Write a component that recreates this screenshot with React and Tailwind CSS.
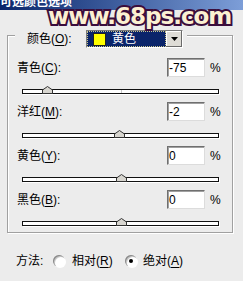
import React from "react";

const font = { fontFamily: '"Liberation Sans", "Noto Sans CJK SC", sans-serif' };

function Mn({ ch }) {
  return (
    <span>
      (<span className="underline underline-offset-2">{ch}</span>)
    </span>
  );
}

function Slider({ value }) {
  const pct = (value + 100) / 200;
  return (
    <div className="relative ml-[14px] mt-[12px] h-[5px] w-[197px] border border-[#111] bg-white shadow-[1px_1px_0_#fff]">
      <div className="absolute left-[98px] top-0 h-[3px] w-px bg-[#c8c8c8]" />
      <svg
        className="absolute top-[-4px]"
        style={{ left: `${pct * 195 - 5}px` }}
        width="11"
        height="8"
        viewBox="0 0 11 8"
      >
        <polygon points="0.5,7.5 0.5,4 5.5,0.5 10.5,4 10.5,7.5" fill="#d8d6d0" stroke="#333" strokeWidth="1" />
      </svg>
    </div>
  );
}

function Row({ name, ch, value }) {
  return (
    <div className="flex flex-col">
      <div className="flex h-[19px] items-center pl-[9px]">
        <div className="w-[150px] text-[12px] leading-none text-black">
          {name}
          <Mn ch={ch} />:
        </div>
        <div className="flex h-[19px] w-[38px] items-center border border-t-[#6f6f6f] border-l-[#6f6f6f] border-b-[#dcdcdc] border-r-[#dcdcdc] bg-white pl-[1px] text-[12px] leading-none text-black shadow-[inset_1px_1px_0_#a0a0a0]">
          {value}
        </div>
        <div className="ml-[5px] text-[12px] leading-none text-black">%</div>
      </div>
      <Slider value={Number(value)} />
      <div className="h-[8px]" />
    </div>
  );
}

function Radio({ checked }) {
  return (
    <div className="flex h-[12px] w-[12px] items-center justify-center rounded-full bg-white shadow-[inset_1px_1px_0_#8a8a8a,inset_2px_2px_0_#c8c8c8,1px_1px_0_#fff]">
      {checked && <div className="h-[4px] w-[4px] rounded-full bg-black" />}
    </div>
  );
}

export default function App() {
  return (
    <div className="relative h-[281px] w-[243px] overflow-hidden bg-[#ececec]" style={font}>
      <div className="h-[10px] overflow-hidden bg-gradient-to-r from-[#0a246a] to-[#7d9ed8]">
        <div className="-mt-[4px] text-[12px] font-bold leading-[12px] text-white">可选颜色选项</div>
      </div>

      <div className="ml-[7px] mt-[25px] h-[198px] w-[226px] border border-[#a0a0a0] shadow-[inset_1px_1px_0_#fff,1px_1px_0_#fff]">
        <div className="-mt-[6px] ml-[7px] flex h-[18px] w-[172px] items-center bg-[#ececec] pl-[12px]">
          <div className="w-[59px] text-[12px] leading-none text-black">
            颜色<Mn ch="O" />:
          </div>
          <div className="flex h-[18px] w-[97px] border border-t-[#7a7a7a] border-l-[#7a7a7a] border-b-[#fff] border-r-[#fff] bg-white">
            <div className="flex flex-1 items-center border border-dotted border-[#c9c48a] bg-[#0a246a] pl-[5px]">
              <div className="h-[13px] w-[13px] border border-[#222] bg-[#ffff00]" />
              <span className="ml-[6px] text-[12px] leading-none text-white">黄色</span>
            </div>
            <div className="flex w-[16px] items-center justify-center bg-[#dedcd6] shadow-[inset_-1px_-1px_0_#6a6a6a,inset_1px_1px_0_#fff]">
              <svg width="7" height="4" viewBox="0 0 7 4">
                <polygon points="0,0 7,0 3.5,4" fill="#000" />
              </svg>
            </div>
          </div>
        </div>

        <div className="mt-[10px] flex flex-col">
          <Row name="青色" ch="C" value="-75" />
          <Row name="洋红" ch="M" value="-2" />
          <Row name="黄色" ch="Y" value="0" />
          <Row name="黑色" ch="B" value="0" />
        </div>
      </div>

      <div className="ml-[16px] mt-[21px] flex h-[14px] items-center text-[12px] leading-none text-black">
        <span className="w-[37px]">方法:</span>
        <Radio checked={false} />
        <span className="ml-[7px] w-[53px]">
          相对<Mn ch="R" />
        </span>
        <Radio checked={true} />
        <span className="ml-[6px]">
          绝对<Mn ch="A" />
        </span>
      </div>

      <div
        className="pointer-events-none absolute left-[48px] top-[2px] text-[23px] font-bold leading-[28px] tracking-[-1px] text-[#fbf0d2] [-webkit-text-stroke:4px_#3a0d3c] [paint-order:stroke_fill]"
        style={{ fontFamily: '"DejaVu Sans", sans-serif' }}
      >
        www.68ps.com
      </div>
    </div>
  );
}
